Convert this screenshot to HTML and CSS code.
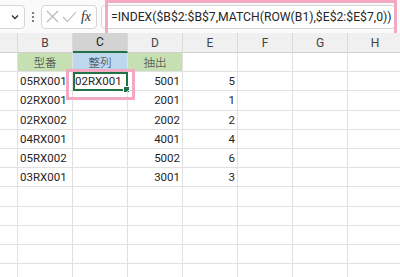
FILE: index.html
```html
<!DOCTYPE html>
<html lang="ja">

<head>
    <meta charset="UTF-8">
    <title>INDEX MATCH</title>
    <link rel="stylesheet" href="styles.css">
</head>

<body>
    <!-- Formula bar -->
    <div class="toolbar">
        <div class="name-box">
            <svg width="10" height="10" viewBox="0 0 10 10"><path d="M2 3.5 L5 6.5 L8 3.5" fill="none" stroke="#333" stroke-width="1.4"/></svg>
        </div>
        <div class="dots">
            <svg width="4" height="12" viewBox="0 0 4 12"><circle cx="2" cy="2" r="1" fill="#555"/><circle cx="2" cy="6" r="1" fill="#555"/><circle cx="2" cy="10" r="1" fill="#555"/></svg>
        </div>
        <div class="fx-box">
            <svg width="13" height="13" viewBox="0 0 13 13"><path d="M1 1 L12 12 M12 1 L1 12" stroke="#b8b8b8" stroke-width="1.1"/></svg>
            <svg width="15" height="12" viewBox="0 0 15 12"><path d="M1 6 L5.5 10.5 L14 1" fill="none" stroke="#b8b8b8" stroke-width="1.1"/></svg>
            <span class="fx">fx</span>
        </div>
        <div class="formula-box">=INDEX($B$2:$B$7,MATCH(ROW(B1),$E$2:$E$7,0))</div>
        <div class="mark mark-formula"></div>
    </div>

    <!-- Sheet -->
    <div class="sheet">
        <div class="col-head"></div>
        <div class="col-head">B</div>
        <div class="col-head active">C</div>
        <div class="col-head">D</div>
        <div class="col-head">E</div>
        <div class="col-head">F</div>
        <div class="col-head">G</div>
        <div class="col-head">H</div>

        <div class="cell"></div>
        <div class="cell center green">型番</div>
        <div class="cell center blue">整列</div>
        <div class="cell center green">抽出</div>
        <div class="cell"></div><div class="cell"></div><div class="cell"></div><div class="cell"></div>

        <div class="cell"></div>
        <div class="cell">05RX001</div>
        <div class="cell selected">02RX001<span class="handle"></span></div>
        <div class="cell num">5001</div>
        <div class="cell num">5</div>
        <div class="cell"></div><div class="cell"></div><div class="cell"></div>

        <div class="cell"></div>
        <div class="cell">02RX001</div>
        <div class="cell"></div>
        <div class="cell num">2001</div>
        <div class="cell num">1</div>
        <div class="cell"></div><div class="cell"></div><div class="cell"></div>

        <div class="cell"></div>
        <div class="cell">02RX002</div>
        <div class="cell"></div>
        <div class="cell num">2002</div>
        <div class="cell num">2</div>
        <div class="cell"></div><div class="cell"></div><div class="cell"></div>

        <div class="cell"></div>
        <div class="cell">04RX001</div>
        <div class="cell"></div>
        <div class="cell num">4001</div>
        <div class="cell num">4</div>
        <div class="cell"></div><div class="cell"></div><div class="cell"></div>

        <div class="cell"></div>
        <div class="cell">05RX002</div>
        <div class="cell"></div>
        <div class="cell num">5002</div>
        <div class="cell num">6</div>
        <div class="cell"></div><div class="cell"></div><div class="cell"></div>

        <div class="cell"></div>
        <div class="cell">03RX001</div>
        <div class="cell"></div>
        <div class="cell num">3001</div>
        <div class="cell num">3</div>
        <div class="cell"></div><div class="cell"></div><div class="cell"></div>

        <div class="cell"></div><div class="cell"></div><div class="cell"></div><div class="cell"></div>
        <div class="cell"></div><div class="cell"></div><div class="cell"></div><div class="cell"></div>
        <div class="cell"></div><div class="cell"></div><div class="cell"></div><div class="cell"></div>
        <div class="cell"></div><div class="cell"></div><div class="cell"></div><div class="cell"></div>
        <div class="cell"></div><div class="cell"></div><div class="cell"></div><div class="cell"></div>
        <div class="cell"></div><div class="cell"></div><div class="cell"></div><div class="cell"></div>
        <div class="cell"></div><div class="cell"></div><div class="cell"></div><div class="cell"></div>
        <div class="cell"></div><div class="cell"></div><div class="cell"></div><div class="cell"></div>
        <div class="cell"></div><div class="cell"></div><div class="cell"></div><div class="cell"></div>
        <div class="cell"></div><div class="cell"></div><div class="cell"></div><div class="cell"></div>

        <!-- highlight around C2 -->
        <div class="mark mark-cell"></div>
    </div>
</body>

</html>
```

FILE: styles.css
```css
body {
    margin: 0;
    width: 400px;
    height: 277px;
    overflow: hidden;
    background-color: #ffffff;
    font-family: Roboto, "Noto Sans CJK JP", sans-serif;
    color: #262626;
}

/* Formula bar */
.toolbar {
    position: relative;
    height: 33px;
    background-color: #fafafa;
    display: flex;
    align-items: center;
    gap: 4px;
}

.name-box {
    width: 30px;
    height: 24px;
    margin-left: -5px;
    box-sizing: border-box;
    border: 1px solid #d6d6d6;
    border-radius: 4px;
    background-color: #fff;
    display: flex;
    align-items: center;
    justify-content: flex-end;
    padding-right: 4px;
}

.dots {
    width: 8px;
    display: flex;
    justify-content: center;
}

.fx-box {
    width: 56px;
    height: 24px;
    box-sizing: border-box;
    border: 1px solid #d6d6d6;
    border-radius: 4px;
    background-color: #fff;
    display: flex;
    align-items: center;
    justify-content: space-between;
    padding: 0 5px 0 4px;
}

.fx {
    font-family: "Liberation Serif", serif;
    font-style: italic;
    font-size: 14px;
    color: #333;
}

.formula-box {
    flex: 1;
    height: 24px;
    box-sizing: border-box;
    border: 1px solid #d6d6d6;
    border-radius: 4px;
    background-color: #fff;
    font-size: 12.2px;
    line-height: 22px;
    padding-left: 9px;
    white-space: nowrap;
    margin-right: 4px;
}

/* pink annotation frames */
.mark {
    position: absolute;
    border: 3.5px solid #f4a9c3;
    box-sizing: border-box;
    pointer-events: none;
}

.mark-formula {
    left: 105px;
    top: 0;
    width: 292px;
    height: 36px;
}

.mark-cell {
    left: 66px;
    top: 36px;
    width: 69px;
    height: 31px;
}

/* Sheet grid */
.sheet {
    position: relative;
    display: grid;
    grid-template-columns: 18px repeat(7, 55px);
    grid-template-rows: 20px;
    grid-auto-rows: 19.2px;
    font-size: 11.5px;
}

.col-head {
    background-color: #f0f0f0;
    border-right: 1px solid #dadada;
    border-bottom: 1px solid #cfcfcf;
    box-sizing: border-box;
    color: #444;
    font-size: 12px;
    display: flex;
    align-items: center;
    justify-content: center;
}

.col-head.active {
    background-color: #d3d3d3;
    border-bottom: 2px solid #217346;
    color: #222;
}

.cell {
    position: relative;
    border-right: 1px solid #e1e1e1;
    border-bottom: 1px solid #e1e1e1;
    box-sizing: border-box;
    padding: 0 2px;
    display: flex;
    align-items: center;
    white-space: nowrap;
}

.cell.center {
    justify-content: center;
    font-weight: 300;
    color: #333;
}

.cell.num {
    justify-content: flex-end;
}

.green {
    background-color: #c6e0b4;
}

.blue {
    background-color: #bdd7ee;
}

.cell.selected {
    outline: 2px solid #217346;
    outline-offset: -2px;
}

.handle {
    position: absolute;
    right: -3px;
    bottom: -3px;
    width: 5px;
    height: 5px;
    background-color: #217346;
    border: 1px solid #fff;
}
```
